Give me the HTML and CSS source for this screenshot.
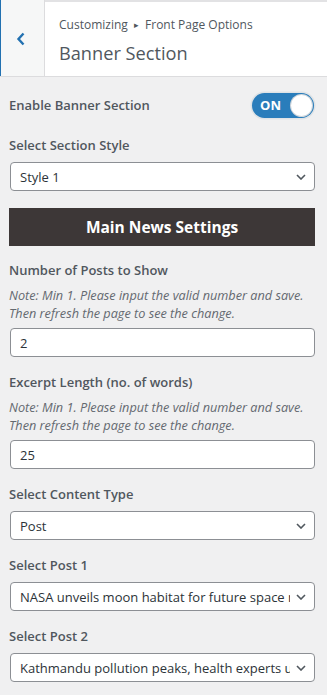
FILE: index.html
```html
<!DOCTYPE html>
<html lang="en">
<head>
<meta charset="utf-8">
<title>Banner Section</title>
<link rel="stylesheet" href="styles.css">
</head>
<body>
<header class="panel-head">
  <button class="back" aria-label="Back">
    <svg width="10" height="14" viewBox="0 0 10 14"><path d="M7.5 1.5 L2.5 7 L7.5 12.5" fill="none" stroke="#2271b1" stroke-width="2.4"/></svg>
  </button>
  <div class="head-text">
    <div class="crumbs">Customizing <span class="tri">&#9656;</span> Front Page Options</div>
    <h1 class="title">Banner Section</h1>
  </div>
</header>

<main class="controls">
  <div class="row toggle-row">
    <span class="label">Enable Banner Section</span>
    <span class="toggle"><span class="toggle-text">ON</span><span class="knob"></span></span>
  </div>

  <div class="field">
    <span class="label">Select Section Style</span>
    <div class="select"><span class="value">Style 1</span><svg class="chev" width="10" height="6" viewBox="0 0 10 6"><path d="M1 1 L5 5 L9 1" fill="none" stroke="#50575e" stroke-width="1.6"/></svg></div>
  </div>

  <div class="heading">Main News Settings</div>

  <div class="field">
    <span class="label">Number of Posts to Show</span>
    <p class="note">Note: Min 1. Please input the valid number and save. Then refresh the page to see the change.</p>
    <input class="text" type="text" value="2">
  </div>

  <div class="field">
    <span class="label">Excerpt Length (no. of words)</span>
    <p class="note">Note: Min 1. Please input the valid number and save. Then refresh the page to see the change.</p>
    <input class="text" type="text" value="25">
  </div>

  <div class="field">
    <span class="label">Select Content Type</span>
    <div class="select"><span class="value">Post</span><svg class="chev" width="10" height="6" viewBox="0 0 10 6"><path d="M1 1 L5 5 L9 1" fill="none" stroke="#50575e" stroke-width="1.6"/></svg></div>
  </div>

  <div class="field">
    <span class="label">Select Post 1</span>
    <div class="select"><span class="value">NASA unveils moon habitat for future space missions</span><svg class="chev" width="10" height="6" viewBox="0 0 10 6"><path d="M1 1 L5 5 L9 1" fill="none" stroke="#50575e" stroke-width="1.6"/></svg></div>
  </div>

  <div class="field">
    <span class="label">Select Post 2</span>
    <div class="select"><span class="value">Kathmandu pollution peaks, health experts urge caution</span><svg class="chev" width="10" height="6" viewBox="0 0 10 6"><path d="M1 1 L5 5 L9 1" fill="none" stroke="#50575e" stroke-width="1.6"/></svg></div>
  </div>
</main>
</body>
</html>
```
FILE: styles.css
```css
* { box-sizing: border-box; }
html, body { margin: 0; padding: 0; }
body {
  background: #f0f0f1;
  font-family: "Open Sans", "Noto Sans", sans-serif;
  color: #50575e;
  width: 327px;
  height: 695px;
  overflow: hidden;
}
.panel-head {
  display: flex;
  height: 77px;
  border-top: 2px solid #e2e2e4;
  border-bottom: 1px solid #dcdcde;
  background: #fff;
}
.back {
  width: 45px;
  flex: none;
  margin: -2px 0 0 0;
  padding: 0 4px 0 0;
  background: #f6f7f7;
  border: 0;
  border-left: 1px solid #2271b1;
  border-right: 1px solid #dcdcde;
  display: flex;
  align-items: center;
  justify-content: center;
}
.back svg { display: block; margin-top: 2px; }
.head-text {
  padding: 14px 0 0 14px;
}
.crumbs {
  font-size: 12px;
  line-height: 18px;
  color: #50575e;
}
.tri { font-size: 9px; margin: 0 3px; position: relative; top: -1px; }
.title {
  margin: 5px 0 0;
  font-size: 18.2px;
  font-weight: 400;
  line-height: 26px;
  color: #50575e;
}
.controls {
  padding: 0 12px 0 9px;
  display: flex;
  flex-direction: column;
}
.label {
  display: block;
  font-size: 13px;
  font-weight: 600;
  line-height: 18px;
  color: #50575e;
}
.toggle-row {
  display: flex;
  align-items: center;
  justify-content: space-between;
  margin-top: 16px;
  height: 24px;
}
.toggle {
  display: flex;
  align-items: center;
  justify-content: space-between;
  width: 62px;
  height: 25px;
  margin-right: 1px;
  border-radius: 13px;
  background: #2a7dbb;
  box-shadow: 0 0 0 1.5px #dfe3e6;
  padding: 0 2px 0 8px;
}
.toggle-text {
  color: #fff;
  font-weight: 700;
  font-size: 13px;
  letter-spacing: 0.2px;
}
.knob {
  width: 21px;
  height: 21px;
  border-radius: 50%;
  background: #fff;
  box-shadow: 0 0 0 1px #cfd6dc;
}
.field {
  display: flex;
  flex-direction: column;
  margin-top: 19px;
}
.field .label { margin-bottom: 8px; }
.select {
  display: flex;
  align-items: center;
  height: 29px;
  background: #fff;
  border: 1px solid #8c8f94;
  border-radius: 4px;
  padding: 0 8px 0 9px;
  margin-left: 1px;
}
.value {
  flex: 1;
  min-width: 0;
  overflow: hidden;
  white-space: nowrap;
  font-size: 13px;
  color: #2c3338;
  margin-right: 6px;
}
.chev { flex: none; display: block; }
.heading {
  margin-top: 17px;
  height: 38px;
  background: #3d3737;
  color: #fff;
  font-weight: 700;
  font-size: 15.5px;
  display: flex;
  align-items: center;
  justify-content: center;
}
.heading + .field { margin-top: 15px; }
.note {
  margin: 0 0 6px;
  font-size: 12.7px;
  font-style: italic;
  line-height: 17.5px;
  color: #646970;
}
.text {
  height: 29px;
  background: #fff;
  border: 1px solid #8c8f94;
  border-radius: 4px;
  padding: 0 9px;
  font-family: inherit;
  font-size: 13px;
  color: #2c3338;
  margin: 0 0 0 1px;
}
.field + .field { margin-top: 16px; }
```
